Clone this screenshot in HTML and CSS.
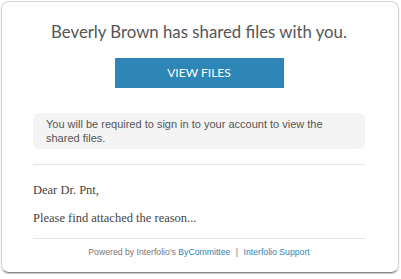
FILE: index.html
```html
<!DOCTYPE html>
<html lang="en">
<head>
    <meta charset="UTF-8">
    <meta name="viewport" content="width=device-width, initial-scale=1.0">
    <title>Shared files</title>
    <link rel="stylesheet" href="styles.css">
</head>
<body>
    <div class="card">
        <h1 class="title">Beverly Brown has shared files with you.</h1>

        <div class="buttonRow">
            <a class="viewButton" href="#">VIEW FILES</a>
        </div>

        <div class="notice">
            You will be required to sign in to your account to view the shared files.
        </div>

        <div class="message">
            <p>Dear Dr. Pnt,</p>
            <p>Please find attached the reason...</p>
        </div>

        <div class="footer">
            Powered by Interfolio's <a href="#">ByCommittee</a>
            <span class="sep">|</span>
            <a href="#">Interfolio Support</a>
        </div>
    </div>
</body>
</html>
```

FILE: styles.css
```css
body {
    margin: 0;
    padding: 1px;
    background-color: #fff;
}

.card {
    box-sizing: border-box;
    width: 398px;
    height: 272px;
    padding: 0 33px 0 31px;
    border: 1px solid #d4d4d4;
    border-bottom-color: #8a8a8a;
    border-radius: 8px;
    box-shadow: 0 1px 1px rgba(0, 0, 0, 0.25);
    display: flex;
    flex-direction: column;
}

.title {
    margin: 20px 0 0;
    font-family: "Lato", sans-serif;
    font-weight: normal;
    font-size: 16.8px;
    line-height: 20px;
    color: #555;
    text-align: center;
}

.buttonRow {
    display: flex;
    justify-content: center;
    margin-top: 16px;
}

.viewButton {
    width: 169px;
    height: 30px;
    line-height: 30px;
    background-color: #2e86b7;
    color: #fff;
    text-decoration: none;
    text-align: center;
    font-family: "Lato", sans-serif;
    font-size: 12px;
}

.notice {
    margin-top: 25px;
    padding: 4px 13px;
    background-color: #f4f4f4;
    border-radius: 6px;
    font-family: "Liberation Sans", sans-serif;
    font-size: 11px;
    line-height: 14px;
    color: #555;
}

.message {
    margin-top: 15px;
    padding-top: 18px;
    border-top: 1px solid #e6e6e6;
    font-family: "Liberation Serif", serif;
    font-size: 12.5px;
    color: #444;
}

.message p {
    margin: 0 0 14px;
    line-height: 14px;
}

.message p:last-child {
    margin-bottom: 0;
}

.footer {
    margin-top: 13px;
    padding-top: 8px;
    border-top: 1px solid #e6e6e6;
    text-align: center;
    font-family: "Liberation Sans", sans-serif;
    font-size: 8.7px;
    color: #777;
}

.footer a {
    color: #2e86b7;
    text-decoration: none;
}

.sep {
    margin: 0 3px;
}
```
